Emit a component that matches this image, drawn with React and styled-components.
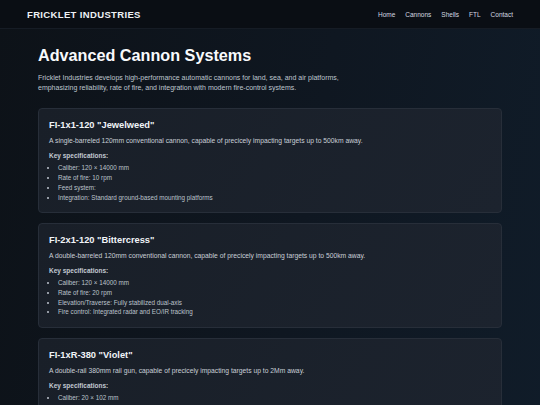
import React from 'react'
import styled, { createGlobalStyle } from 'styled-components'

const GlobalStyle = createGlobalStyle`
  html, body {
    margin: 0;
    padding: 0;
  }
  body {
    font-family: "Liberation Sans", Arial, sans-serif;
    background: linear-gradient(100deg, #0d1218 0%, #0f1721 55%, #101c29 100%);
    color: #e5e7eb;
    min-height: 100vh;
  }
`;

const Header = styled.header`
  height: 29px;
  display: flex;
  align-items: center;
  justify-content: space-between;
  padding: 0 27px;
  background: #0a0e14;
  border-bottom: 1px solid #161c25;
  box-sizing: border-box;
`;

const Brand = styled.div`
  font-size: 9.5px;
  font-weight: 700;
  letter-spacing: 0.35px;
  color: #eef1f5;
`;

const Nav = styled.nav`
  display: flex;
  gap: 10px;
`;

const NavLink = styled.a`
  font-size: 6.5px;
  color: #d4d9e0;
  text-decoration: none;
`;

const Main = styled.main`
  width: 464px;
  margin: 0 auto;
  padding: 16px 0 20px;
`;

const Title = styled.h1`
  font-size: 16.2px;
  font-weight: 700;
  line-height: 20px;
  margin: 0 0 7.5px;
  color: #f8fafc;
`;

const Intro = styled.p`
  font-size: 7px;
  line-height: 10.7px;
  color: #bfc6cf;
  margin: 0 0 14px;
  max-width: 318px;
`;

const CardList = styled.div`
  display: flex;
  flex-direction: column;
  gap: 10px;
`;

const Card = styled.section`
  background: linear-gradient(120deg, #191f28 0%, #1c232e 100%);
  border: 1px solid #272e39;
  border-radius: 4px;
  padding: 11px 10px 9.5px;
  box-sizing: border-box;
`;

const CardTitle = styled.h2`
  font-size: 9.3px;
  font-weight: 700;
  line-height: 11px;
  margin: 0 0 5.4px;
  color: #f1f4f8;
`;

const Desc = styled.p`
  font-size: 6.75px;
  line-height: 10px;
  color: #c9cfd7;
  margin: 0 0 5px;
`;

const SpecLabel = styled.div`
  font-size: 6.5px;
  font-weight: 700;
  line-height: 10px;
  color: #c2c9d2;
  margin-bottom: 2.2px;
`;

const SpecList = styled.ul`
  margin: 0;
  padding-left: 9px;
`;

const SpecItem = styled.li`
  font-size: 6.3px;
  line-height: 9.7px;
  color: #bcc3cc;
`;

const cannons = [
  {
    name: 'FI-1x1-120 "Jewelweed"',
    desc: 'A single-barreled 120mm conventional cannon, capable of precicely impacting targets up to 500km away.',
    specs: [
      'Caliber: 120 × 14000 mm',
      'Rate of fire: 10 rpm',
      'Feed system:',
      'Integration: Standard ground-based mounting platforms',
    ],
  },
  {
    name: 'FI-2x1-120 "Bittercress"',
    desc: 'A double-barreled 120mm conventional cannon, capable of precicely impacting targets up to 500km away.',
    specs: [
      'Caliber: 120 × 14000 mm',
      'Rate of fire: 20 rpm',
      'Elevation/Traverse: Fully stabilized dual-axis',
      'Fire control: Integrated radar and EO/IR tracking',
    ],
  },
  {
    name: 'FI-1xR-380 "Violet"',
    desc: 'A double-rail 380mm rail gun, capable of precicely impacting targets up to 2Mm away.',
    specs: [
      'Caliber: 20 × 102 mm',
      'Rate of fire: 2 rpm',
      'Power: Dedicated capacitor bank',
      'Integration: Naval and fixed installations',
    ],
  },
];

const App = () => (
  <>
    <GlobalStyle />
    <Header>
      <Brand>FRICKLET INDUSTRIES</Brand>
      <Nav>
        <NavLink href="#">Home</NavLink>
        <NavLink href="#">Cannons</NavLink>
        <NavLink href="#">Shells</NavLink>
        <NavLink href="#">FTL</NavLink>
        <NavLink href="#">Contact</NavLink>
      </Nav>
    </Header>
    <Main>
      <Title>Advanced Cannon Systems</Title>
      <Intro>
        Fricklet Industries develops high-performance automatic cannons for land, sea, and air platforms,
        emphasizing reliability, rate of fire, and integration with modern fire-control systems.
      </Intro>
      <CardList>
        {cannons.map((c) => (
          <Card key={c.name}>
            <CardTitle>{c.name}</CardTitle>
            <Desc>{c.desc}</Desc>
            <SpecLabel>Key specifications:</SpecLabel>
            <SpecList>
              {c.specs.map((s) => (
                <SpecItem key={s}>{s}</SpecItem>
              ))}
            </SpecList>
          </Card>
        ))}
      </CardList>
    </Main>
  </>
)

export default App;
